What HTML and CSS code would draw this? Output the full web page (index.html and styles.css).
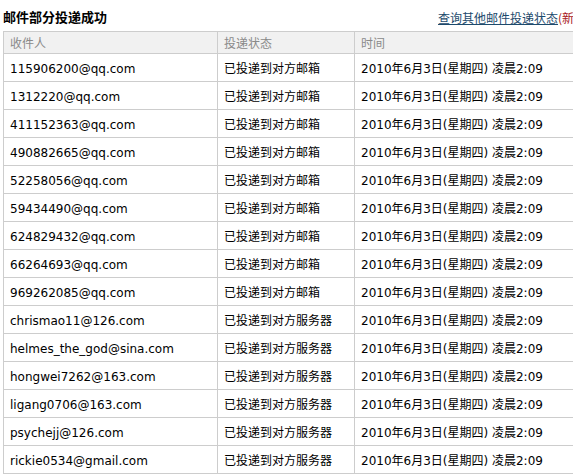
FILE: index.html
```html
<!DOCTYPE html>
<html lang="zh-CN">
<head>
<meta charset="utf-8">
<title>邮件部分投递成功</title>
<link rel="stylesheet" href="styles.css">
</head>
<body>
<div class="page">
  <div class="titlebar">
    <h1 class="title">邮件部分投递成功</h1>
    <span class="more"><a class="link" href="#">查询其他邮件投递状态</a><span class="new">(新功能)</span></span>
  </div>
  <table class="result">
    <colgroup>
      <col class="c1"><col class="c2"><col class="c3">
    </colgroup>
    <thead>
      <tr><th>收件人</th><th>投递状态</th><th>时间</th></tr>
    </thead>
    <tbody>
      <tr><td>115906200@qq.com</td><td>已投递到对方邮箱</td><td>2010年6月3日(星期四) 凌晨2:09</td></tr>
      <tr><td>1312220@qq.com</td><td>已投递到对方邮箱</td><td>2010年6月3日(星期四) 凌晨2:09</td></tr>
      <tr><td>411152363@qq.com</td><td>已投递到对方邮箱</td><td>2010年6月3日(星期四) 凌晨2:09</td></tr>
      <tr><td>490882665@qq.com</td><td>已投递到对方邮箱</td><td>2010年6月3日(星期四) 凌晨2:09</td></tr>
      <tr><td>52258056@qq.com</td><td>已投递到对方邮箱</td><td>2010年6月3日(星期四) 凌晨2:09</td></tr>
      <tr><td>59434490@qq.com</td><td>已投递到对方邮箱</td><td>2010年6月3日(星期四) 凌晨2:09</td></tr>
      <tr><td>624829432@qq.com</td><td>已投递到对方邮箱</td><td>2010年6月3日(星期四) 凌晨2:09</td></tr>
      <tr><td>66264693@qq.com</td><td>已投递到对方邮箱</td><td>2010年6月3日(星期四) 凌晨2:09</td></tr>
      <tr><td>969262085@qq.com</td><td>已投递到对方邮箱</td><td>2010年6月3日(星期四) 凌晨2:09</td></tr>
      <tr><td>chrismao11@126.com</td><td>已投递到对方服务器</td><td>2010年6月3日(星期四) 凌晨2:09</td></tr>
      <tr><td>helmes_the_god@sina.com</td><td>已投递到对方服务器</td><td>2010年6月3日(星期四) 凌晨2:09</td></tr>
      <tr><td>hongwei7262@163.com</td><td>已投递到对方服务器</td><td>2010年6月3日(星期四) 凌晨2:09</td></tr>
      <tr><td>ligang0706@163.com</td><td>已投递到对方服务器</td><td>2010年6月3日(星期四) 凌晨2:09</td></tr>
      <tr><td>psychejj@126.com</td><td>已投递到对方服务器</td><td>2010年6月3日(星期四) 凌晨2:09</td></tr>
      <tr><td>rickie0534@gmail.com</td><td>已投递到对方服务器</td><td>2010年6月3日(星期四) 凌晨2:09</td></tr>
    </tbody>
  </table>
</div>
</body>
</html>
```

FILE: styles.css
```css
html, body {
  margin: 0;
  padding: 0;
  overflow: hidden;
  background: #fff;
}
body {
  font-family: "DejaVu Sans", "Noto Sans CJK SC", sans-serif;
  font-size: 12px;
  color: #000;
}
.page {
  width: 620px;
  padding-left: 3px;
}
.titlebar {
  display: flex;
  align-items: flex-end;
  height: 31px;
  box-sizing: border-box;
  padding-bottom: 6px;
}
.title {
  margin: 0;
  font-family: "Noto Sans CJK SC", sans-serif;
  font-size: 13px;
  font-weight: bold;
  line-height: 16px;
}
.more {
  margin-left: 331px;
  white-space: nowrap;
  font-family: "Noto Sans CJK SC", sans-serif;
  font-size: 12px;
  line-height: 16px;
  position: relative;
  top: 1px;
}
.link {
  color: #1d4a6c;
  text-decoration: underline;
}
.new {
  color: #a8171a;
}
.result {
  border-collapse: collapse;
  table-layout: fixed;
  width: 613px;
}
.c1 { width: 214px; }
.c2 { width: 137px; }
.c3 { width: 262px; }
.result th,
.result td {
  border: 1px solid #cdcdcd;
  text-align: left;
  white-space: nowrap;
  overflow: hidden;
  padding: 0 0 0 6px;
}
.result th {
  background: #f1f1f1;
  color: #8a8a8a;
  font-weight: normal;
  font-family: "Noto Sans CJK SC", sans-serif;
  font-size: 12px;
  line-height: 21px;
}
.result td {
  padding-top: 3px;
  line-height: 24px;
}
```
